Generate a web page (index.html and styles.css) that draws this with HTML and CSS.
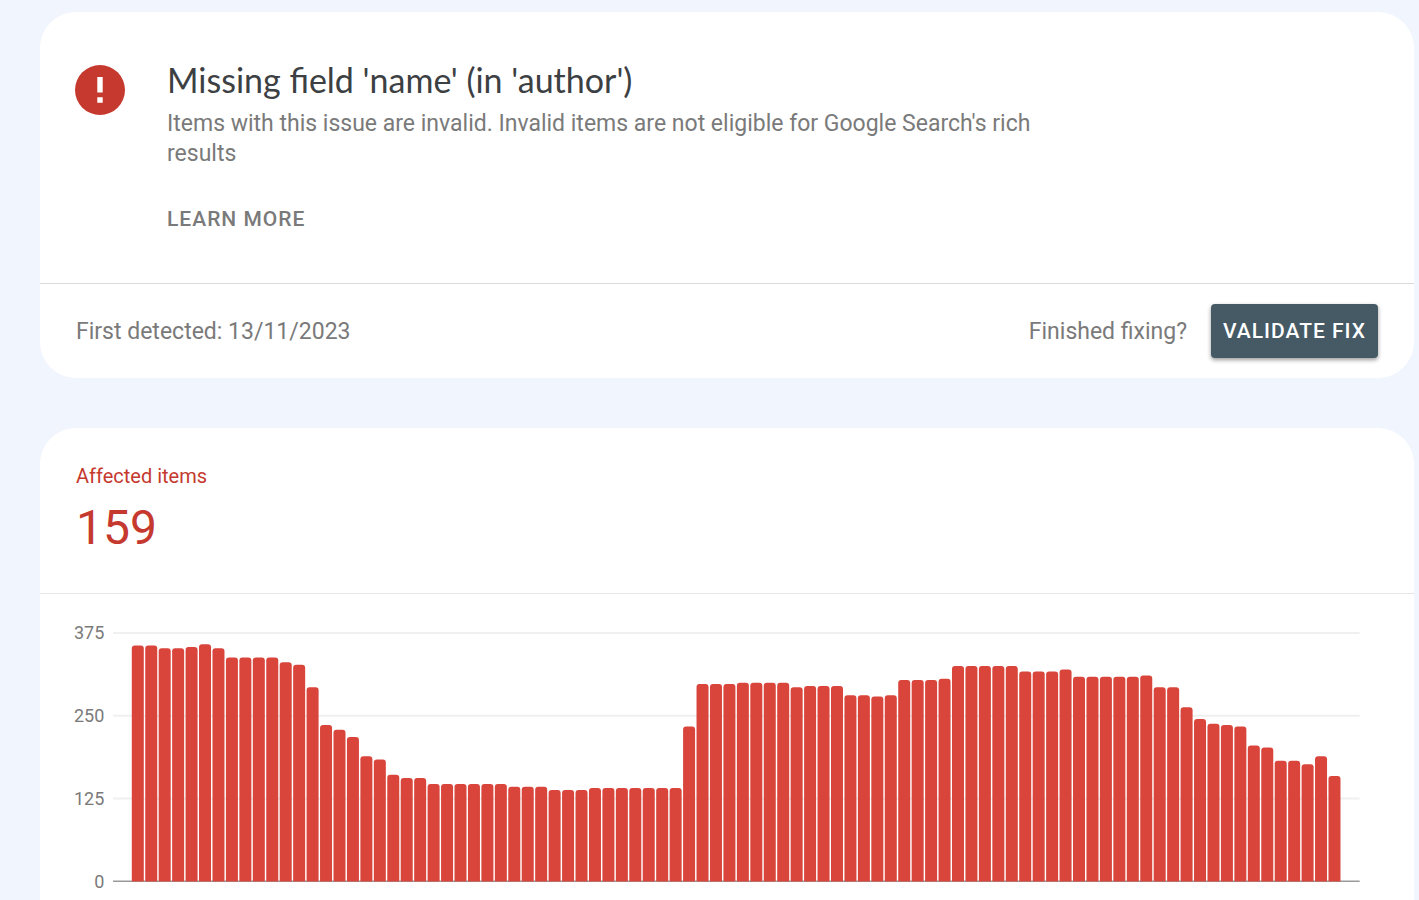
FILE: index.html
```html
<!DOCTYPE html>
<html lang="en">

<head>
  <meta charset="UTF-8">
  <meta name="viewport" content="width=device-width, initial-scale=1.0">
  <title>Missing field 'name' (in 'author')</title>
  <link rel="stylesheet" href="styles.css">
</head>

<body>
  <main>
    <!-- Issue summary -->
    <section class="card">
      <div class="issue">
        <svg class="issue-icon" viewBox="0 0 50 50" aria-hidden="true">
          <circle cx="25" cy="25" r="25" fill="#c5392e" />
          <path d="M22.3 12h5.4v15.5h-5.4zM22.3 32.3h5.4v5.4h-5.4z" fill="#fff" />
        </svg>
        <div class="issue-text">
          <h1>Missing field 'name' (in 'author')</h1>
          <p>Items with this issue are invalid. Invalid items are not eligible for Google Search's rich results</p>
          <a href="#" class="learn-more">LEARN MORE</a>
        </div>
      </div>
      <div class="issue-footer">
        <span>First detected: 13/11/2023</span>
        <div class="validate">
          <span>Finished fixing?</span>
          <button type="button">VALIDATE FIX</button>
        </div>
      </div>
    </section>

    <!-- Affected items chart -->
    <section class="card">
      <div class="affected">
        <h2>Affected items</h2>
        <div class="count">159</div>
      </div>
      <div class="chart">
        <div class="y-axis">
          <span>375</span>
          <span>250</span>
          <span>125</span>
          <span>0</span>
        </div>
        <svg class="plot" id="plot" viewBox="0 0 1247 260" role="img" aria-label="Affected items over time"></svg>
      </div>
    </section>
  </main>

  <script src="chart.js"></script>
</body>

</html>
```

FILE: styles.css
```css
body {
  margin: 0;
  height: 100vh;
  overflow: hidden;
  font-family: Roboto, "Liberation Sans", sans-serif;
  background-color: #f1f5fd;
  color: #7a7a7a;
}

main {
  display: flex;
  flex-direction: column;
  gap: 50px;
  padding: 12px 5px 0 40px;
}

.card {
  background-color: white;
  border-radius: 36px;
}

/* Issue summary */
.issue {
  display: flex;
  align-items: flex-start;
  gap: 42px;
  padding: 48px 36px 46px 35px;
}

.issue-icon {
  flex: none;
  width: 50px;
  height: 50px;
  margin-top: 5px;
}

.issue-text {
  max-width: 880px;
}

h1 {
  margin: 0;
  font-family: Lato, Roboto, sans-serif;
  font-size: 34px;
  font-weight: 400;
  line-height: 40px;
  color: #3c4043;
}

p {
  margin: 9px 0 32px;
  font-size: 23px;
  line-height: 30px;
}

.learn-more {
  display: inline-block;
  font-size: 21px;
  font-weight: 500;
  line-height: 36px;
  letter-spacing: 1px;
  color: #7a7a7a;
  text-decoration: none;
}

.issue-footer {
  display: flex;
  justify-content: space-between;
  align-items: center;
  padding: 20px 36px;
  border-top: 1px solid #dadada;
  font-size: 23px;
}

.validate {
  display: flex;
  align-items: center;
  gap: 24px;
}

button {
  height: 54px;
  padding: 0 12px;
  background-color: #455a64;
  color: white;
  border: none;
  border-radius: 4px;
  box-shadow: 0 2px 4px rgba(0, 0, 0, 0.4);
  font-family: inherit;
  font-size: 21px;
  font-weight: 500;
  letter-spacing: 1px;
  cursor: pointer;
}

/* Affected items */
.affected {
  padding: 36px 36px 35px;
  border-bottom: 1px solid #e6e6e6;
  color: #c5392e;
}

h2 {
  margin: 0;
  font-size: 20px;
  font-weight: 400;
  line-height: 24px;
}

.count {
  margin-top: 10px;
  font-size: 48px;
  line-height: 60px;
}

.chart {
  display: flex;
  align-items: flex-start;
  gap: 9px;
  padding: 28px 54px 48px 34px;
}

.y-axis {
  display: grid;
  grid-auto-rows: 83px;
  flex: none;
  font-size: 18px;
  line-height: 22px;
  text-align: right;
}

.plot {
  flex: 1;
  min-width: 0;
}

.grid-line {
  stroke: #f0f0f0;
  stroke-width: 2;
}

.base-line {
  stroke: #9a9a9a;
  stroke-width: 2;
}

.bar {
  fill: #d9443b;
}
```

FILE: chart.js
```js
const values = [
  356, 356, 352, 352, 354, 358, 352, 338, 338, 338, 338, 331, 327, 293, 236,
  229, 218, 189, 184, 161, 156, 156, 147, 147, 147, 147, 147, 147, 143, 143,
  143, 138, 138, 138, 141, 141, 141, 141, 141, 141, 141, 234, 298, 298, 298,
  300, 300, 300, 300, 293, 295, 295, 295, 281, 281, 279, 281, 304, 304, 304,
  306, 325, 325, 325, 325, 325, 317, 317, 317, 320, 309, 309, 309, 309, 309,
  311, 293, 293, 263, 245, 238, 236, 234, 205, 202, 182, 182, 177, 189, 159
];

const plot = document.getElementById("plot");
const width = 1247;
const top375 = 11;
const base = 260 - 0.5;
const left = 18.8;
const step = 13.45;
const barWidth = 12;

let shapes = "";

// Grid lines at 375, 250 and 125
for (let i = 0; i < 3; i++) {
  const y = top375 + (base - top375) * i / 3;
  shapes += `<line class="grid-line" x1="0" x2="${width}" y1="${y}" y2="${y}" />`;
}

shapes += `<line class="base-line" x1="0" x2="${width}" y1="${base}" y2="${base}" />`;

// Bars with rounded top corners
values.forEach((value, i) => {
  const x = left + i * step;
  const h = value / 375 * (base - top375);
  shapes += `<path class="bar" d="M${x} ${base}v${3 - h}q0 -3 3 -3h${barWidth - 6}q3 0 3 3v${h - 3}z" />`;
});

plot.innerHTML = shapes;
```
